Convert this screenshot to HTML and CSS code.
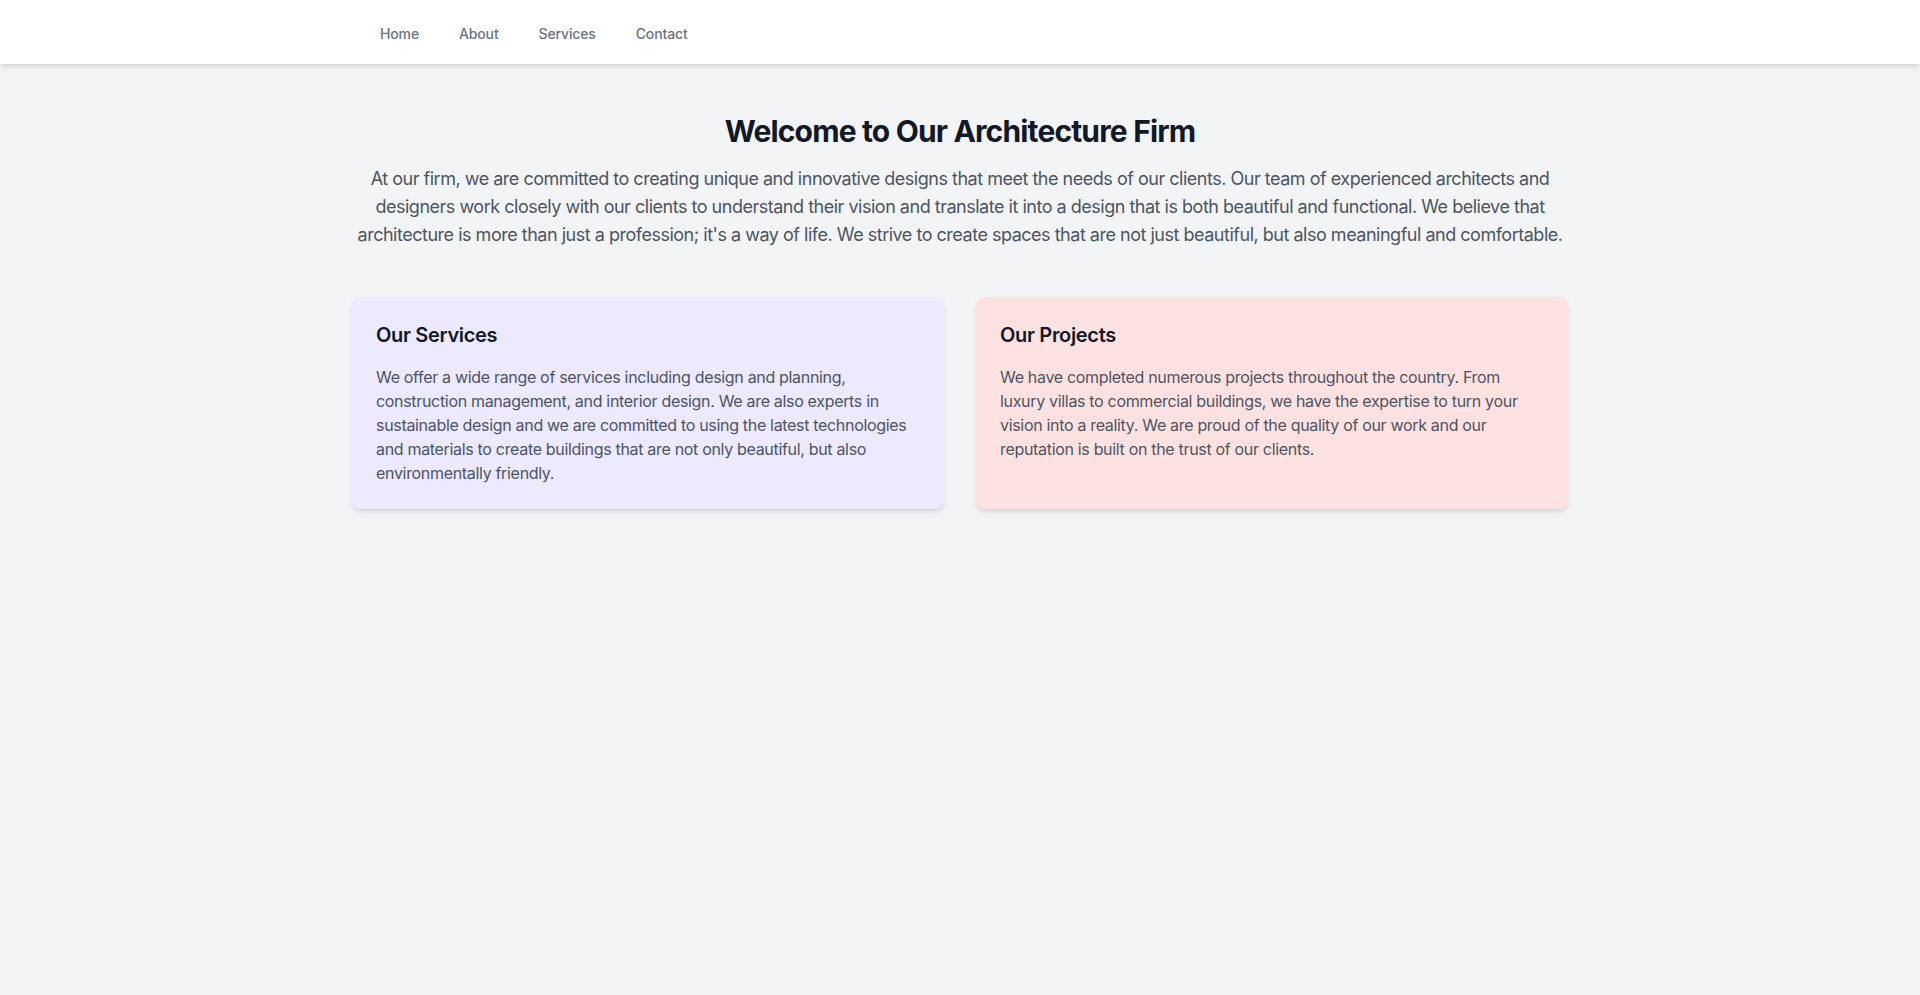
FILE: index.html
```html
<!DOCTYPE html>
<html lang="en">
<head>
<meta charset="utf-8">
<title>Architecture Firm</title>
<link rel="stylesheet" href="styles.css">
</head>
<body>
<nav class="nav">
  <div class="nav-inner">
    <a class="nav-link" href="#">Home</a>
    <a class="nav-link" href="#">About</a>
    <a class="nav-link" href="#">Services</a>
    <a class="nav-link" href="#">Contact</a>
  </div>
</nav>
<main class="main">
  <h1 class="title">Welcome to Our Architecture Firm</h1>
  <p class="intro">At our firm, we are committed to creating unique and innovative designs that meet the needs of our clients. Our team of experienced architects and designers work closely with our clients to understand their vision and translate it into a design that is both beautiful and functional. We believe that architecture is more than just a profession; it's a way of life. We strive to create spaces that are not just beautiful, but also meaningful and comfortable.</p>
  <div class="cards">
    <section class="card card-violet">
      <h2 class="card-title">Our Services</h2>
      <p class="card-text">We offer a wide range of services including design and planning, construction management, and interior design. We are also experts in sustainable design and we are committed to using the latest technologies and materials to create buildings that are not only beautiful, but also environmentally friendly.</p>
    </section>
    <section class="card card-red">
      <h2 class="card-title">Our Projects</h2>
      <p class="card-text">We have completed numerous projects throughout the country. From luxury villas to commercial buildings, we have the expertise to turn your vision into a reality. We are proud of the quality of our work and our reputation is built on the trust of our clients.</p>
    </section>
  </div>
</main>
</body>
</html>
```

FILE: styles.css
```css
* { box-sizing: border-box; }
html, body { margin: 0; padding: 0; }
body {
  background: #f3f4f6;
  font-family: Inter, "Noto Sans", sans-serif;
  color: #111827;
  min-height: 995px;
  letter-spacing: -0.02em;
}
.nav {
  background: #ffffff;
  height: 64px;
  box-shadow: 0 4px 6px -1px rgba(0,0,0,0.1), 0 2px 4px -2px rgba(0,0,0,0.1);
  position: relative;
}
.nav-inner {
  max-width: 1280px;
  margin: 0 auto;
  padding: 3px 48px 0;
  height: 64px;
  display: flex;
  align-items: center;
  gap: 16px;
}
.nav-link {
  padding: 8px 12px;
  font-size: 14px;
  line-height: 20px;
  font-weight: 500;
  color: #6b7280;
  text-decoration: none;
  letter-spacing: -0.01em;
}
.main {
  max-width: 1280px;
  margin: 0 auto;
  padding: 49px 32px 48px;
}
.title {
  margin: 0 0 16px;
  text-align: center;
  font-size: 30px;
  line-height: 36px;
  font-weight: 700;
  color: #111827;
  letter-spacing: -0.028em;
}
.intro {
  margin: 0;
  text-align: center;
  font-size: 18px;
  line-height: 28px;
  color: #4b5563;
  letter-spacing: -0.027em;
}
.cards {
  margin-top: 48px;
  display: grid;
  grid-template-columns: 1fr 1fr;
  gap: 32px;
}
.card {
  border-radius: 8px;
  padding: 24px;
  box-shadow: 0 4px 6px -1px rgba(0,0,0,0.1), 0 2px 4px -2px rgba(0,0,0,0.1);
}
.card-violet { background: #ede9fe; }
.card-red { background: #fee2e2; }
.card-title {
  margin: 0 0 16px;
  font-size: 20px;
  line-height: 28px;
  font-weight: 600;
  color: #111827;
}
.card-text {
  margin: 0;
  font-size: 16px;
  line-height: 24px;
  color: #4b5563;
}
```
